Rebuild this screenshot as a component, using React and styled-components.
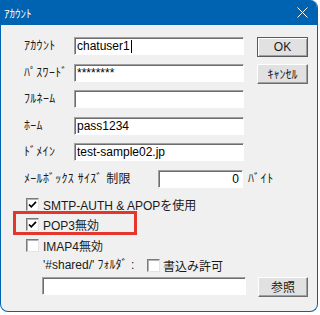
import React from 'react';
import styled, { createGlobalStyle } from 'styled-components';

//===================================================
// ================ Global / Window =================
//===================================================

const GlobalStyle = createGlobalStyle`
  html, body {
    margin: 0;
    padding: 0;
    background: #fff;
  }
  body {
    font-family: "Liberation Sans", "Noto Sans CJK JP", sans-serif;
    font-size: 12px;
    color: #000;
  }
`;

const Window = styled.div`
  position: relative;
  width: 318px;
  height: 312px;
  box-sizing: border-box;
  border: 1px solid #0063b1;
  border-top: none;
  border-radius: 0 8px 8px 8px;
  background: #f0f0f0;
  overflow: hidden;
`;

const TitleBar = styled.div`
  display: flex;
  align-items: center;
  height: 25px;
  padding: 0 9px 0 3px;
  background: #0063b1;
  color: #fff;
  font-size: 11px;
`;

const CloseIcon = styled.svg`
  margin-left: auto;
  width: 11px;
  height: 11px;
`;

const Body = styled.div`
  display: flex;
  flex-direction: column;
  padding: 12px 0 0 23px;
`;

//====================================================
// ============= Define base components =============
//====================================================

const FieldRow = styled.div`
  display: flex;
  align-items: flex-start;
  height: 18px;
  margin-bottom: ${(props) => props.gap ?? 8.5}px;
  padding-left: ${(props) => props.indent || 0}px;
`;

// half-width kana labels, spaced a little to match the dialog font
const Label = styled.div`
  width: ${(props) => props.width || 50}px;
  flex-shrink: 0;
  line-height: 18px;
  letter-spacing: ${(props) => (props.tight ? 0 : 0.3)}px;
  white-space: nowrap;
  color: #1a1a1a;
`;

const TextBox = styled.div`
  display: flex;
  align-items: center;
  justify-content: ${(props) => (props.right ? 'flex-end' : 'flex-start')};
  width: ${(props) => props.width || 170}px;
  height: 18px;
  box-sizing: border-box;
  padding: 0 3px 0 2px;
  background: #fff;
  border: 1px solid;
  border-color: #a0a0a0 #fff #fff #a0a0a0;
  box-shadow: inset 1px 1px 0 #6d6d6d;
  white-space: nowrap;
  line-height: 16px;
`;

const Caret = styled.span`
  display: inline-block;
  width: 1px;
  height: 13px;
  margin-left: 1px;
  background: #000;
`;

const Button = styled.div`
  display: flex;
  align-items: center;
  justify-content: center;
  width: ${(props) => props.width || 51}px;
  height: 20px;
  margin-left: ${(props) => props.offset || 13}px;
  box-sizing: border-box;
  background: #e1e1e1;
  border: 1px solid;
  border-color: ${(props) => (props.primary ? '#5a5a5a' : '#fff #6d6d6d #6d6d6d #fff')};
  box-shadow: ${(props) => (props.primary ? 'inset 1px 1px 0 #fff, inset -1px -1px 0 #a0a0a0' : 'inset -1px -1px 0 #a0a0a0')};
  font-size: 12px;
  color: #1a1a1a;
`;

const Unit = styled.div`
  margin-left: 5px;
  line-height: 18px;
  letter-spacing: 0.6px;
  color: #1a1a1a;
`;

const CheckRow = styled.div`
  display: flex;
  align-items: center;
  height: 13px;
  margin-bottom: ${(props) => props.gap ?? 7.5}px;
  padding-left: ${(props) => props.indent ?? 2}px;
`;

const Box = styled.div`
  display: flex;
  align-items: center;
  justify-content: center;
  width: 13px;
  height: 13px;
  flex-shrink: 0;
  box-sizing: border-box;
  background: #fff;
  border: 1px solid;
  border-color: #7a7a7a #e3e3e3 #e3e3e3 #7a7a7a;
  box-shadow: inset 1px 1px 0 #b4b4b4;
`;

const CheckText = styled.span`
  margin-left: ${(props) => props.offset ?? 4}px;
  white-space: nowrap;
  color: #1a1a1a;
`;

const Highlight = styled.div`
  position: absolute;
  left: 12px;
  top: 211px;
  width: 124px;
  height: 24px;
  box-sizing: border-box;
  border: 3px solid #e4362a;
`;

//=======================================================
// =============== Define compound components ===========
//=======================================================

const CheckBox = ({ checked }) => (
  <Box>
    {checked && (
      <svg width="9" height="9" viewBox="0 0 9 9">
        <path d="M1 4.5 L3.3 6.8 L8 1.8" fill="none" stroke="#000" strokeWidth="1.7" />
      </svg>
    )}
  </Box>
);

export default function App() {
  return (
    <>
      <GlobalStyle />
      <Window>
        <TitleBar>
          ｱｶｳﾝﾄ
          <CloseIcon viewBox="0 0 11 11">
            <path d="M0.5 0.5 L10.5 10.5 M10.5 0.5 L0.5 10.5" stroke="#fff" strokeWidth="1" />
          </CloseIcon>
        </TitleBar>
        <Body>
          <FieldRow>
            <Label>ｱｶｳﾝﾄ</Label>
            <TextBox>chatuser1<Caret /></TextBox>
            <Button primary>OK</Button>
          </FieldRow>
          <FieldRow>
            <Label>ﾊﾟｽﾜｰﾄﾞ</Label>
            <TextBox>********</TextBox>
            <Button>ｷｬﾝｾﾙ</Button>
          </FieldRow>
          <FieldRow>
            <Label>ﾌﾙﾈｰﾑ</Label>
            <TextBox />
          </FieldRow>
          <FieldRow>
            <Label>ﾎｰﾑ</Label>
            <TextBox>pass1234</TextBox>
          </FieldRow>
          <FieldRow>
            <Label>ﾄﾞﾒｲﾝ</Label>
            <TextBox>test-sample02.jp</TextBox>
          </FieldRow>
          <FieldRow gap={10}>
            <Label width={134}>ﾒｰﾙﾎﾞｯｸｽ ｻｲｽﾞ 制限</Label>
            <TextBox width={85} right>0</TextBox>
            <Unit>ﾊﾞｲﾄ</Unit>
          </FieldRow>
          <CheckRow>
            <CheckBox checked />
            <CheckText>SMTP-AUTH &amp; APOPを使用</CheckText>
          </CheckRow>
          <CheckRow>
            <CheckBox checked />
            <CheckText>POP3無効</CheckText>
          </CheckRow>
          <CheckRow gap={7}>
            <CheckBox />
            <CheckText>IMAP4無効</CheckText>
          </CheckRow>
          <CheckRow indent={19} gap={5}>
            <Label width={104} tight>'#shared/' ﾌｫﾙﾀﾞ :</Label>
            <CheckBox />
            <CheckText offset={3}>書込み許可</CheckText>
          </CheckRow>
          <FieldRow indent={18}>
            <TextBox width={204} />
            <Button width={50} offset={12}>参照</Button>
          </FieldRow>
        </Body>
        <Highlight />
      </Window>
    </>
  );
}
